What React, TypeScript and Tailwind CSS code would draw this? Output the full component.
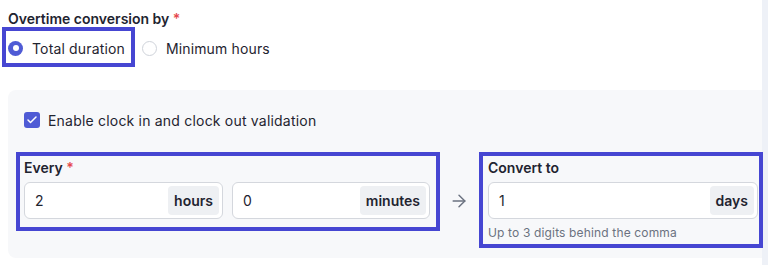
import { ArrowRight, Check } from 'lucide-react';

function UnitInput({ value, unit, className }: { value: string; unit: string; className: string }) {
  return (
    <div className={`flex h-[37px] items-stretch rounded-[6px] border border-[#d4d7dd] bg-white p-[3px] ${className}`}>
      <div className="flex flex-1 items-center pl-[7px] text-[14px] text-[#1f2430]">{value}</div>
      <div className="flex items-center rounded-[4px] bg-[#eef0f3] px-[6px] text-[14px] font-semibold text-[#1f2430]">
        {unit}
      </div>
    </div>
  );
}

export default function App() {
  return (
    <div className="flex h-[265px] w-[768px] overflow-hidden bg-white" style={{ fontFamily: 'Inter, "Noto Sans", sans-serif' }}>
      <div className="flex-1 pl-[8px]">
        <h3 className="pt-[9px] text-[14px] leading-[20px] font-semibold text-[#1f2430]">
          Overtime conversion by <span className="text-[#e5484d]">*</span>
        </h3>

        <div className="mt-[9px] flex h-[20px] items-center text-[14px] tracking-[0.15px] text-[#1f2430]">
          <label className="relative flex items-center gap-[9px]">
            <span className="pointer-events-none absolute -top-[11px] -bottom-[8px] -left-[6px] -right-[10px] border-4 border-[#4646d2]" />
            <span className="flex h-[15px] w-[15px] items-center justify-center rounded-full bg-[#4f5bd5]">
              <span className="h-[6px] w-[6px] rounded-full bg-white" />
            </span>
            Total duration
          </label>
          <label className="ml-[17px] flex items-center gap-[9px]">
            <span className="h-[15px] w-[15px] rounded-full border border-[#cfd3da] bg-white" />
            Minimum hours
          </label>
        </div>

        <div className="mt-[32px] rounded-l-[8px] bg-[#f7f8fa] pt-[20px] pr-[4px] pb-[17px] pl-[16px]">
          <label className="flex h-[20px] items-center gap-[8px] text-[14px] tracking-[0.2px] text-[#1f2430]">
            <span className="flex h-[16px] w-[16px] items-center justify-center rounded-[3px] bg-[#4f5bd5]">
              <Check size={12} strokeWidth={3} className="text-white" />
            </span>
            Enable clock in and clock out validation
          </label>

          <div className="mt-[28px] flex items-start">
            <div className="relative w-[406px]">
              <span className="pointer-events-none absolute -top-[6px] -bottom-[12px] -left-[8px] -right-[10px] border-4 border-[#4646d2]" />
              <div className="text-[14px] leading-[20px] font-semibold text-[#1f2430]">
                Every <span className="text-[#e5484d]">*</span>
              </div>
              <div className="mt-[4px] flex gap-[9px]">
                <UnitInput value="2" unit="hours" className="w-[199px]" />
                <UnitInput value="0" unit="minutes" className="w-[198px]" />
              </div>
            </div>

            <div className="mt-[24px] flex h-[37px] w-[58px] items-center justify-center">
              <ArrowRight size={20} strokeWidth={1.75} className="text-[#6b7280]" />
            </div>

            <div className="relative flex-1">
              <span className="pointer-events-none absolute -top-[6px] -bottom-[7px] -left-[9px] -right-[5px] border-4 border-[#4646d2]" />
              <div className="text-[14px] leading-[20px] font-semibold text-[#1f2430]">Convert to</div>
              <UnitInput value="1" unit="days" className="mt-[4px] w-full" />
              <p className="mt-[6px] text-[12px] leading-[16px] tracking-[0.15px] text-[#6b7280]">Up to 3 digits behind the comma</p>
            </div>
          </div>
        </div>
      </div>
      <div className="w-[6px] bg-[#eef1f7]" />
    </div>
  );
}
